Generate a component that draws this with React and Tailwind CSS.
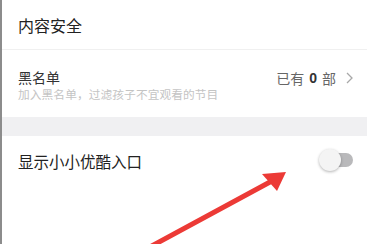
import React from "react";

const Toggle = () => (
  <div className="relative w-[34px] h-[22px] mr-[14px]">
    <div className="absolute right-0 top-[4px] w-[26px] h-[14px] rounded-full bg-[#b9b9bb]" />
    <div className="absolute left-0 top-0 w-[22px] h-[22px] rounded-full bg-[#f4f4f4] shadow-[0_1px_3px_rgba(0,0,0,0.3)]" />
  </div>
);

const Arrow = () => (
  <svg
    className="absolute left-0 top-0 pointer-events-none"
    width="367"
    height="244"
    viewBox="0 0 367 244"
  >
    <line x1="146" y1="248" x2="268" y2="182" stroke="#ec3a36" strokeWidth="5" strokeLinecap="round" />
    <polygon points="284,172 260,174 275,191" fill="#ec3a36" />
  </svg>
);

export default function App() {
  return (
    <div
      className="relative w-[367px] h-[244px] overflow-hidden bg-white border-l-2 border-[#8c8c8c]"
      style={{ fontFamily: '"Noto Sans CJK SC", "Noto Sans", sans-serif' }}
    >
      <div className="flex items-center h-[49px] pl-[16px]">
        <span className="text-[16px] leading-[24px] text-[#222]">内容安全</span>
      </div>
      <div className="h-px bg-[#f0f0f0]" />
      <div className="flex justify-between items-start pl-[16px] pr-[14px] pt-[18px] pb-[16px]">
        <div className="flex flex-col">
          <span className="text-[14px] leading-[18px] text-[#333]">黑名单</span>
          <span className="mt-px text-[11.7px] leading-[14px] text-[#c4c4c4] tracking-[0.1px]">
            加入黑名单，过滤孩子不宜观看的节目
          </span>
        </div>
        <div className="flex items-center h-[18px] mt-px text-[14px] text-[#666]">
          <span>已有</span>
          <span className="font-bold text-[#333] mx-[5px] font-['Liberation_Sans']">0</span>
          <span>部</span>
          <svg className="ml-[10px]" width="7" height="12" viewBox="0 0 7 12">
            <path d="M1 1l5 5-5 5" fill="none" stroke="#a8a8a8" strokeWidth="1.3" />
          </svg>
        </div>
      </div>
      <div className="h-[19px] bg-[#f0f0f2]" />
      <div className="flex justify-between items-start pl-[16px] pt-[13px]">
        <span className="text-[15.5px] leading-[24px] text-[#222]">显示小小优酷入口</span>
        <Toggle />
      </div>
      <Arrow />
    </div>
  );
}
